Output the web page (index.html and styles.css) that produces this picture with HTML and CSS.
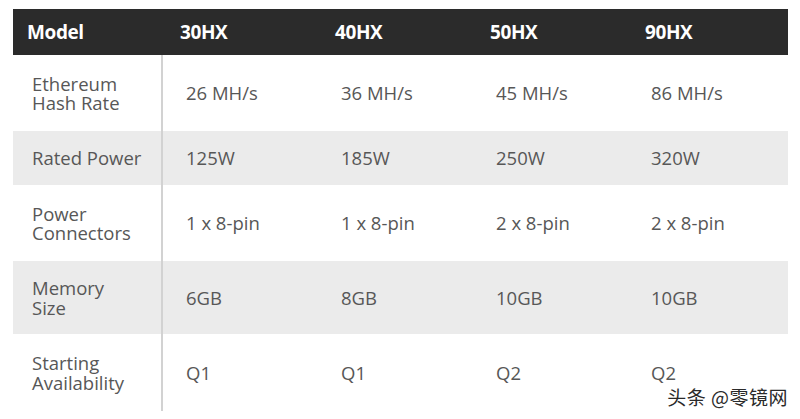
FILE: index.html
```html
<!DOCTYPE html>
<html lang="en">
<head>
<meta charset="utf-8">
<title>Specs</title>
<link rel="stylesheet" href="styles.css">
</head>
<body>
<div class="page">
  <div class="spec-table">
    <div class="head label">Model</div>
    <div class="head">30HX</div>
    <div class="head">40HX</div>
    <div class="head">50HX</div>
    <div class="head">90HX</div>

    <div class="cell label">Ethereum<br>Hash Rate</div>
    <div class="cell">26 MH/s</div>
    <div class="cell">36 MH/s</div>
    <div class="cell">45 MH/s</div>
    <div class="cell">86 MH/s</div>

    <div class="cell label alt">Rated Power</div>
    <div class="cell alt">125W</div>
    <div class="cell alt">185W</div>
    <div class="cell alt">250W</div>
    <div class="cell alt">320W</div>

    <div class="cell label">Power<br>Connectors</div>
    <div class="cell">1 x 8-pin</div>
    <div class="cell">1 x 8-pin</div>
    <div class="cell">2 x 8-pin</div>
    <div class="cell">2 x 8-pin</div>

    <div class="cell label alt">Memory<br>Size</div>
    <div class="cell alt">6GB</div>
    <div class="cell alt">8GB</div>
    <div class="cell alt">10GB</div>
    <div class="cell alt">10GB</div>

    <div class="cell label">Starting<br>Availability</div>
    <div class="cell">Q1</div>
    <div class="cell">Q1</div>
    <div class="cell">Q2</div>
    <div class="cell">Q2</div>
  </div>
  <div class="watermark">头条 @零镜网</div>
</div>
</body>
</html>
```

FILE: styles.css
```css
html, body {
  margin: 0;
  padding: 0;
  background: #ffffff;
}

.page {
  position: relative;
  width: 800px;
  height: 419px;
  padding: 9px 0 0 13px;
  box-sizing: border-box;
  font-family: "Open Sans", "Noto Sans", sans-serif;
}

.spec-table {
  display: grid;
  width: 775px;
  grid-template-columns: 150px 155px 155px 155px 160px;
  grid-template-rows: 46px 76px 54px 76px 73px 77px;
}

.head {
  background: #2b2b2b;
  color: #ffffff;
  font-weight: 700;
  font-size: 19px;
  letter-spacing: -0.4px;
  display: flex;
  align-items: center;
  padding-left: 17px;
  padding-bottom: 1px;
  box-sizing: border-box;
}

.head.label {
  padding-left: 14px;
}

.cell {
  display: flex;
  align-items: center;
  padding-left: 23px;
  box-sizing: border-box;
  font-size: 18.5px;
  color: #575757;
  background: #ffffff;
  line-height: 19.5px;
}

.cell.alt {
  background: #ebebeb;
}

.cell.label {
  padding-left: 19px;
  border-right: 2px solid #d2d2d2;
}

.watermark {
  position: absolute;
  right: 12px;
  bottom: 13px;
  font-family: "Noto Sans CJK SC", sans-serif;
  font-size: 19px;
  letter-spacing: 0.5px;
  color: #2a2a2a;
  text-shadow: 0 0 1px #fff, 1px 1px 0 #fff, -1px -1px 0 #fff;
  line-height: 1;
}
```
